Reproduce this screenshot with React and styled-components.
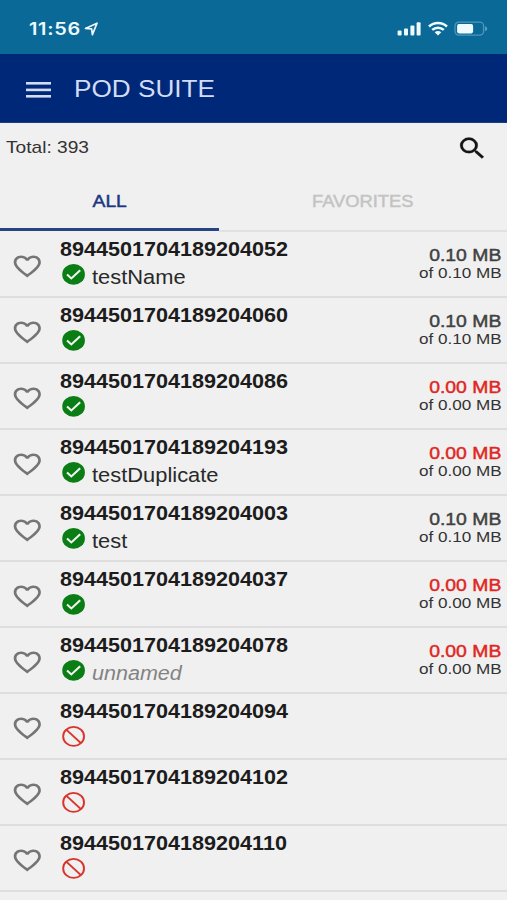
import React from "react";
import styled, { createGlobalStyle } from "styled-components";

const GlobalStyle = createGlobalStyle`
  * { box-sizing: border-box; }
  html, body { margin: 0; padding: 0; background: #f0f0f0; }
  body { font-family: "Liberation Sans", Arial, sans-serif; color: #1c1c1c; overflow: hidden; }
  svg { display: block; flex: none; }
`;

const Screen = styled.div`
  width: 100%;
  height: 900px;
  overflow: hidden;
  display: flex;
  flex-direction: column;
  background: #f0f0f0;
`;

/* Text in the app's wide proportions. */
const Label = styled.span`
  display: inline-block;
  white-space: nowrap;
  transform: scaleX(${(p) => p.$wide || 1.107});
  transform-origin: ${(p) => p.$origin || "left"} center;
`;

const StatusBar = styled.header`
  flex: none;
  height: 54px;
  background: #0b6998;
  color: #effaff;
  display: flex;
  justify-content: space-between;
  padding: 0 19px 0 29px;
`;

const Clock = styled.div`
  display: flex;
  font: 600 17px/20px Inter, sans-serif;
  letter-spacing: 0.6px;
  padding-top: 19px;
  svg { margin: 3px 0 0 10.5px; }
`;

const Indicators = styled.div`
  display: flex;
  padding-top: 21px;
`;

const AppBar = styled.div`
  flex: none;
  height: 69px;
  background: #002878;
  border-bottom: 1px solid #1b3c84;
  color: #d3dcf6;
  display: flex;
  padding: 28px 0 0 26px;
`;

const Title = styled.h1`
  margin: -7px 0 0 23px;
  font-size: 24px;
  line-height: 28px;
  font-weight: 400;
`;

const Summary = styled.div`
  flex: none;
  height: 49px;
  display: flex;
  justify-content: space-between;
  padding: 11px 18.5px 0 5.8px;
  font-size: 17px;
  line-height: 28px;
  color: #333;
`;

const Tabs = styled.nav`
  flex: none;
  height: 60px;
  display: grid;
  grid-template-columns: 219px 1fr;
`;

const Tab = styled.div`
  text-align: center;
  font-size: 16.5px;
  line-height: 20px;
  padding-top: 18.5px;
  padding-right: ${(p) => (p.$active ? 0 : "1px")};
  color: ${(p) => (p.$active ? "#1b3680" : "#c3c3c3")};
  -webkit-text-stroke: 0.45px currentColor;
  border-bottom: ${(p) => (p.$active ? "3px solid #274585" : "2px solid #e1e1e1")};
  height: ${(p) => (p.$active ? "58.5px" : "60px")};
`;

const Row = styled.div`
  flex: none;
  height: 66px;
  border-bottom: 2px solid #dedede;
  display: grid;
  grid-template-columns: 60px 1fr auto;
  padding-right: 5.5px;
`;

const Favorite = styled.div`
  padding: 19.5px 0 0 11px;
`;

const Details = styled.div`
  padding-top: 6px;
`;

const Iccid = styled.div`
  font-weight: 700;
  font-size: 19.5px;
  line-height: 22px;
`;

const StatusLine = styled.div`
  display: flex;
  margin-top: 2px;
`;

const Name = styled.div`
  margin: 5px 0 0 5px;
  font-size: 19.3px;
  line-height: 22px;
  font-style: ${(p) => (p.$unnamed ? "italic" : "normal")};
  color: ${(p) => (p.$unnamed ? "#838383" : "#292929")};
`;

const Usage = styled.div`
  padding-top: 14px;
  text-align: right;
  line-height: 18px;
`;

const Remaining = styled.div`
  font-size: 17px;
  line-height: 19px;
  margin-bottom: -1px;
  color: ${(p) => (p.$empty ? "#e0261f" : "#414141")};
  -webkit-text-stroke: 0.45px currentColor;
`;

const Quota = styled.div`
  font-size: 14.8px;
  color: #333;
`;

const LocationIcon = () => (
  <svg width="15" height="14" viewBox="0 0 15 14">
    <path d="M1.5 6.4 13 1.2 8.4 12.6 7.6 6.8Z" fill="none" stroke="currentColor" strokeWidth="1.7" strokeLinejoin="round" />
  </svg>
);

const SignalIcon = () => (
  <svg width="24" height="16" viewBox="0 0 24 16" fill="currentColor">
    <rect x="0.6" y="9.6" width="4" height="4.8" rx="1" />
    <rect x="7" y="7.4" width="4" height="7" rx="1" />
    <rect x="13.4" y="4.6" width="4" height="9.8" rx="1" />
    <rect x="19.6" y="1.2" width="4" height="13.2" rx="1" />
  </svg>
);

const WifiIcon = styled((props) => (
  <svg {...props} width="20" height="15" viewBox="0 0 20 15">
    <g fill="none" stroke="currentColor" strokeWidth="2.5">
      <path d="M1 5.5C6 .9 14 .9 19 5.5" />
      <path d="M4.2 8.9C7.6 5.9 12.4 5.9 15.8 8.9" />
    </g>
    <path d="M6.7 11.2C8.6 9.7 11.4 9.7 13.3 11.2L10 14.6Z" fill="currentColor" />
  </svg>
))`
  margin-left: 7px;
`;

const BatteryIcon = styled((props) => (
  <svg {...props} width="34" height="16" viewBox="0 0 34 16">
    <rect x="1" y="1.1" width="28.6" height="13" rx="3.8" fill="none" stroke="#4f97ba" strokeWidth="1.3" />
    <path d="M31.2 5.2C33.8 6 33.8 9.2 31.2 10Z" fill="#62a4c4" />
    <rect x="3.1" y="3.1" width="16" height="9.3" rx="1.8" fill="currentColor" />
  </svg>
))`
  margin-left: 6.5px;
`;

const MenuIcon = () => (
  <svg width="25" height="16" viewBox="0 0 25 16" fill="currentColor">
    <rect y="0" width="25" height="2.6" />
    <rect y="6.6" width="25" height="2.6" />
    <rect y="13" width="25" height="2.6" />
  </svg>
);

const SearchIcon = () => (
  <svg width="32.7" height="28.8" viewBox="0 0 24 24" preserveAspectRatio="none" fill="#151515" stroke="#151515" strokeWidth="0.2">
    <path d="M15.5 14h-.79l-.28-.27A6.47 6.47 0 0 0 16 9.5 6.5 6.5 0 1 0 9.5 16c1.61 0 3.09-.59 4.23-1.57l.27.28v.79l5 4.99L20.49 19l-4.99-5zm-6 0C7.01 14 5 11.99 5 9.5S7.01 5 9.5 5 14 7.01 14 9.5 11.99 14 9.5 14z" />
  </svg>
);

const HeartIcon = () => (
  <svg width="32.6" height="28.6" viewBox="0 0 24 24" preserveAspectRatio="none" fill="#757575">
    <path d="M16.5 3c-1.74 0-3.41.81-4.5 2.09C10.91 3.81 9.24 3 7.5 3 4.42 3 2 5.42 2 8.5c0 3.78 3.4 6.86 8.55 11.54L12 21.35l1.45-1.32C18.6 15.36 22 12.28 22 8.5 22 5.42 19.58 3 16.5 3zm-4.4 15.55l-.1.1-.1-.1C7.14 14.24 4 11.39 4 8.5 4 6.5 5.5 5 7.5 5c1.54 0 3.04.99 3.57 2.36h1.87C13.46 5.99 14.96 5 16.5 5c2 0 3.5 1.5 3.5 3.5 0 2.89-3.14 5.74-7.9 10.05z" />
  </svg>
);

const ActiveIcon = () => (
  <svg width="27.2" height="24.8" viewBox="0 0 24 24" preserveAspectRatio="none">
    <circle cx="12" cy="12" r="10" fill="#0a7d14" />
    <path d="M6.2 12.1 10 15.8 17.8 8" fill="none" stroke="#f0f5f0" strokeWidth="1.8" />
  </svg>
);

const BlockedIcon = () => (
  <svg width="27.2" height="24.8" viewBox="0 0 24 24" preserveAspectRatio="none" fill="none" stroke="#d9342b" strokeWidth="1.7">
    <circle cx="12" cy="12" r="9.2" />
    <path d="M5.5 5.5 18.5 18.5" />
  </svg>
);

const sims = [
  { iccid: "8944501704189204052", active: true, name: "testName", left: "0.10" },
  { iccid: "8944501704189204060", active: true, left: "0.10" },
  { iccid: "8944501704189204086", active: true, left: "0.00" },
  { iccid: "8944501704189204193", active: true, name: "testDuplicate", left: "0.00" },
  { iccid: "8944501704189204003", active: true, name: "test", left: "0.10" },
  { iccid: "8944501704189204037", active: true, left: "0.00" },
  { iccid: "8944501704189204078", active: true, name: "unnamed", unnamed: true, left: "0.00" },
  { iccid: "8944501704189204094" },
  { iccid: "8944501704189204102" },
  { iccid: "8944501704189204110" },
];

const SimRow = ({ sim }) => (
  <Row>
    <Favorite><HeartIcon /></Favorite>
    <Details>
      <Iccid><Label>{sim.iccid}</Label></Iccid>
      <StatusLine>
        {sim.active ? <ActiveIcon /> : <BlockedIcon />}
        {sim.name && <Name $unnamed={sim.unnamed}><Label $wide={sim.unnamed ? 1.117 : 1.135}>{sim.name}</Label></Name>}
      </StatusLine>
    </Details>
    {sim.left && (
      <Usage>
        <Remaining $empty={sim.left === "0.00"}>
          <Label $wide={1.14} $origin="right">{sim.left} MB</Label>
        </Remaining>
        <Quota><Label $wide={1.155} $origin="right">of {sim.left} MB</Label></Quota>
      </Usage>
    )}
  </Row>
);

export default function App() {
  return (
    <>
      <GlobalStyle />
      <Screen>
        <StatusBar>
          <Clock>
            <Label $wide={1.17}>11:56</Label>
            <LocationIcon />
          </Clock>
          <Indicators>
            <SignalIcon />
            <WifiIcon />
            <BatteryIcon />
          </Indicators>
        </StatusBar>
        <AppBar>
          <MenuIcon />
          <Title><Label $wide={1.09}>POD SUITE</Label></Title>
        </AppBar>
        <Summary>
          <Label $wide={1.125}>Total: 393</Label>
          <SearchIcon />
        </Summary>
        <Tabs>
          <Tab $active><Label $wide={1.17} $origin="center">ALL</Label></Tab>
          <Tab><Label $wide={1.11} $origin="center">FAVORITES</Label></Tab>
        </Tabs>
        {sims.map((sim) => <SimRow key={sim.iccid} sim={sim} />)}
      </Screen>
    </>
  );
}
